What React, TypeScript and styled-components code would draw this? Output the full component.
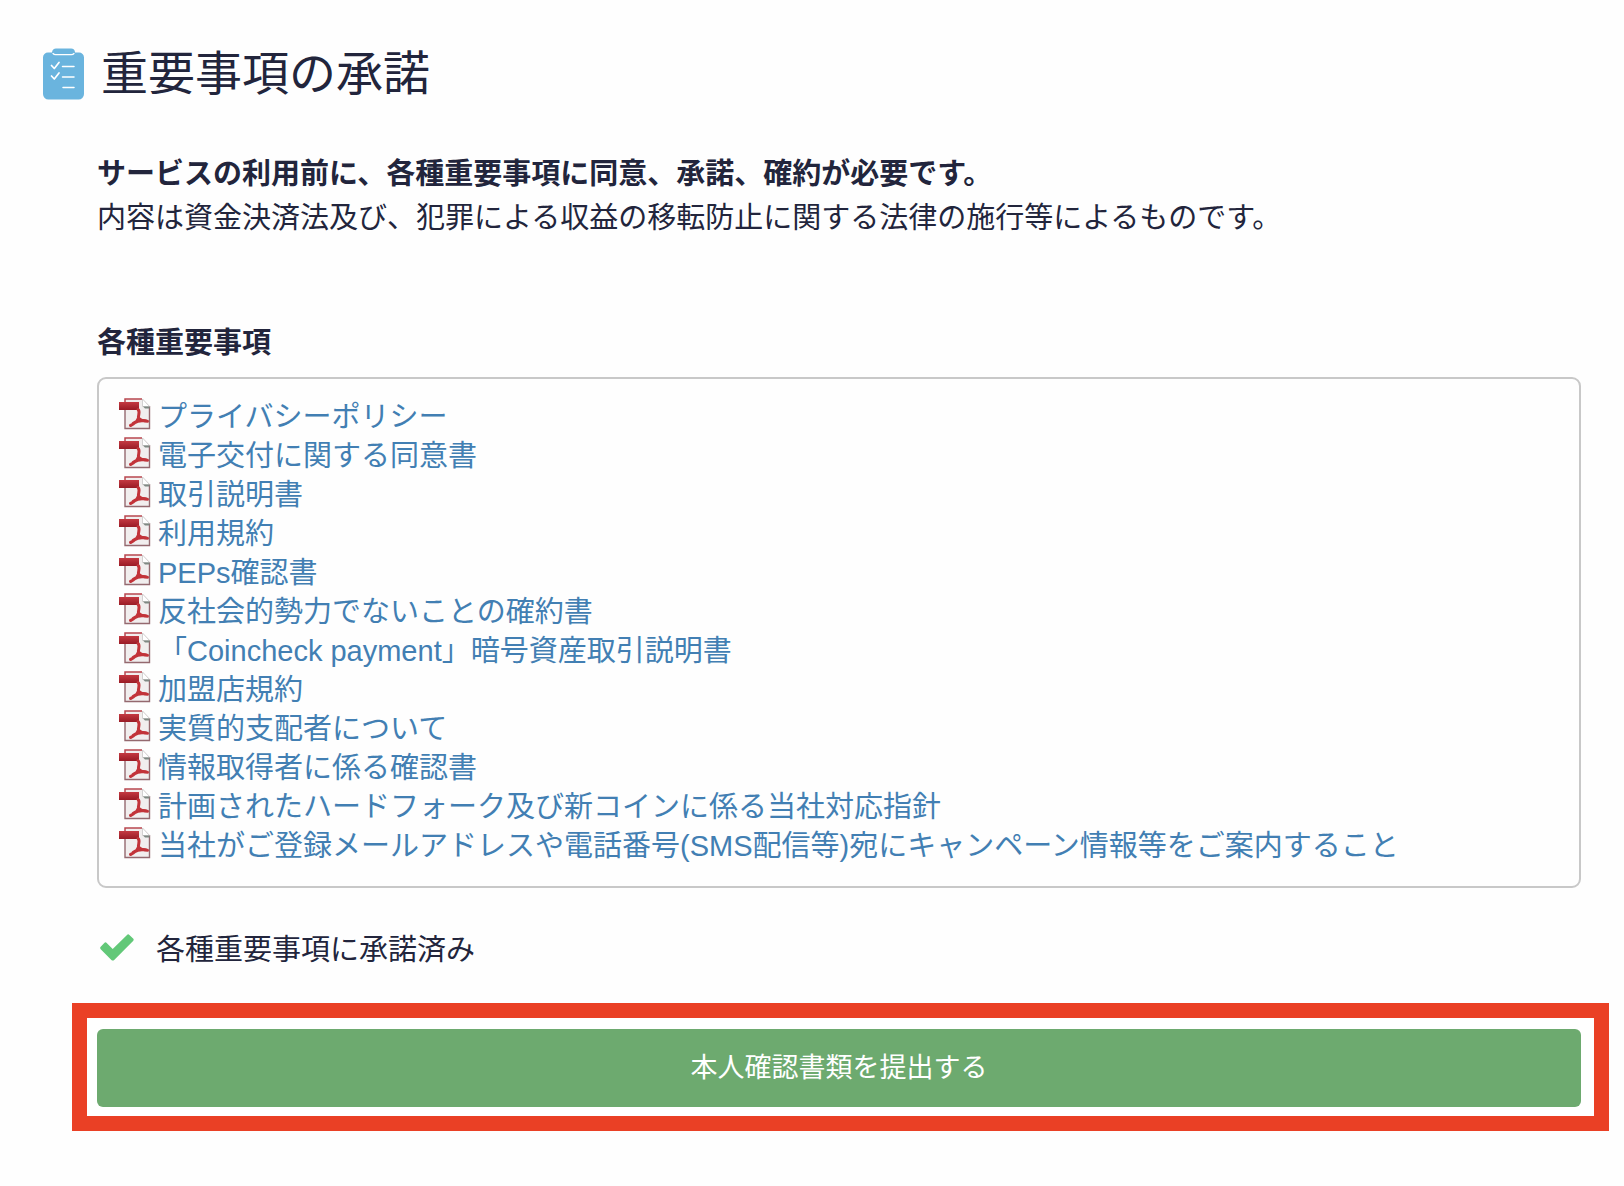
import React from "react";
import styled, { createGlobalStyle } from "styled-components";

const colors = {
  page: "#fefefe",
  text: "#22253c",
  link: "#427fb3",
  line: "#c8c8c8",
  sky: "#6ab4de",
  check: "#62c878",
  button: "#6daa6f",
  frame: "#ea4025",
};

const GlobalStyle = createGlobalStyle`
  *, *::before, *::after { box-sizing: border-box; }
  body {
    margin: 0;
    background: ${colors.page};
    color: ${colors.text};
    font-family: "Liberation Sans", "Noto Sans CJK JP", sans-serif;
    font-size: 29px;
    line-height: 44px;
  }
`;

const Page = styled.main`
  display: flex;
  flex-direction: column;
  padding: 46px 15px 55px 43px;
`;

const Header = styled.header`
  display: flex;
  align-items: center;
  gap: 17px;
`;

const Title = styled.h1`
  margin: 0;
  font-size: 47px;
  line-height: 56px;
  font-weight: 400;
`;

const Content = styled.div`
  display: flex;
  flex-direction: column;
  padding: 50px 28px 31px 54px;
`;

const Lead = styled.p`
  margin: 0;
  font-weight: ${(p: { $strong?: boolean }) => (p.$strong ? 700 : 400)};
`;

const SectionTitle = styled.h2`
  margin: 81px 0 12px;
  font-size: 29px;
  line-height: 44px;
  font-weight: 700;
`;

const DocumentList = styled.ul`
  margin: 0;
  padding: 19px 20px 20px;
  list-style: none;
  border: 2px solid ${colors.line};
  border-radius: 9px;
`;

const Icon = styled.svg<{ $w: number; $h: number }>`
  flex: none;
  display: block;
  width: ${(p) => p.$w}px;
  height: ${(p) => p.$h}px;
`;

const DocumentItem = styled.li`
  display: flex;
  align-items: flex-start;
  gap: 7px;
  line-height: 39px;
`;

const DocumentLink = styled.a`
  color: ${colors.link};
  text-decoration: none;
  &:hover { text-decoration: underline; }
`;

const Status = styled.p`
  display: flex;
  align-items: center;
  gap: 22px;
  margin: 40px 0 0;
  padding-left: 3px;

  ${Icon} {
    margin-bottom: 6px;
  }
`;

const Highlight = styled.div`
  display: flex;
  margin-left: 29px;
  padding: 11px 13px 9px 10px;
  border: 15px solid ${colors.frame};
  background: #fff;
`;

const SubmitButton = styled.button`
  flex: 1;
  padding: 17px 24px;
  border: 0;
  border-radius: 6px;
  background: ${colors.button};
  color: #fff;
  font-family: inherit;
  font-size: 27px;
  line-height: 44px;
  cursor: pointer;
`;

const ClipboardIcon = () => (
  <Icon $w={41} $h={52} viewBox="0 0 41 52" aria-hidden="true">
    <path
      fill={colors.sky}
      d="M5 4.500h4C9 2 11 .500 13 .500h15c2.500 0 4 1.500 4 4h4a5 5 0 0 1 5 5V46a5.500 5.500 0 0 1-5.500 5.500h-30A5.500 5.500 0 0 1 0 46V9.500a5 5 0 0 1 5-5z"
    />
    <g fill="none" stroke="#fff" strokeLinecap="round" strokeLinejoin="round">
      <path strokeWidth="1.200" d="M10 5.500q1 1.200 2.500 1.200h16q1.500 0 2.500-1.200" />
      <path strokeWidth="1.700" d="M8.500 17.500l2.800 3L16 14.500M8.500 28l2.800 3L16 25" />
      <path strokeWidth="1.500" d="M19.500 18.500H31M19.500 29H31M20 39.500h11" />
    </g>
  </Icon>
);

const PdfIcon = () => (
  <Icon $w={32} $h={32} viewBox="0 0 32 32" aria-hidden="true">
    <defs>
      <linearGradient id="pdf-band" x1="0" y1="0" x2="0" y2="1">
        <stop offset="0" stopColor="#c43a42" />
        <stop offset="1" stopColor="#991b25" />
      </linearGradient>
    </defs>
    <path fill="#f1eeee" d="M6 1H24l7 7v22.500H6z" />
    <path fill="none" stroke="#94696f" strokeWidth="1.400" d="M6 11v19.500H30.500V8" />
    <path fill="none" stroke="#b8474f" strokeWidth="1.500" d="M6 4V1H23" />
    <path fill="#fff" stroke="#c9c6c6" strokeWidth=".8" d="M23.500 1v7.500h7z" />
    <path fill="#7f8983" d="M24 8.500h6.500v2H26z" />
    <path fill="url(#pdf-band)" d="M0 4h20v8H0z" />
    <path
      fill="none"
      stroke="#c23339"
      strokeWidth="3"
      strokeLinecap="round"
      strokeLinejoin="round"
      d="M19 11.500c2.500 2 0 5.500.500 8.500-1.500 3.500-4.500 6-8 7.500M19.500 20c2.500 2.500 5.500 3.300 9 3.300M14 25.500c3-2 7.500-3.200 13-2.800"
    />
  </Icon>
);

const CheckIcon = () => (
  <Icon $w={34} $h={27} viewBox="0 0 34 27" aria-hidden="true">
    <path
      fill={colors.check}
      d="M.7 12.800l3.600-3.900q1.200-1.200 2.400 0l6 6L27 .9q1.200-1.200 2.400 0L33.100 4.600q1.200 1.200 0 2.400L14.200 26q-1.400 1.200-2.800 0L.7 15.200q-1.100-1.200 0-2.400z"
    />
  </Icon>
);

const documents = [
  "プライバシーポリシー",
  "電子交付に関する同意書",
  "取引説明書",
  "利用規約",
  "PEPs確認書",
  "反社会的勢力でないことの確約書",
  "「Coincheck payment」暗号資産取引説明書",
  "加盟店規約",
  "実質的支配者について",
  "情報取得者に係る確認書",
  "計画されたハードフォーク及び新コインに係る当社対応指針",
  "当社がご登録メールアドレスや電話番号(SMS配信等)宛にキャンペーン情報等をご案内すること",
];

export default function App() {
  return (
    <>
      <GlobalStyle />
      <Page lang="ja">
        <Header>
          <ClipboardIcon />
          <Title>重要事項の承諾</Title>
        </Header>
        <Content>
          <Lead $strong>サービスの利用前に、各種重要事項に同意、承諾、確約が必要です。</Lead>
          <Lead>内容は資金決済法及び、犯罪による収益の移転防止に関する法律の施行等によるものです。</Lead>
          <SectionTitle>各種重要事項</SectionTitle>
          <DocumentList>
            {documents.map((name) => (
              <DocumentItem key={name}>
                <PdfIcon />
                <DocumentLink href="#">{name}</DocumentLink>
              </DocumentItem>
            ))}
          </DocumentList>
          <Status>
            <CheckIcon />
            各種重要事項に承諾済み
          </Status>
        </Content>
        <Highlight>
          <SubmitButton type="button">本人確認書類を提出する</SubmitButton>
        </Highlight>
      </Page>
    </>
  );
}
